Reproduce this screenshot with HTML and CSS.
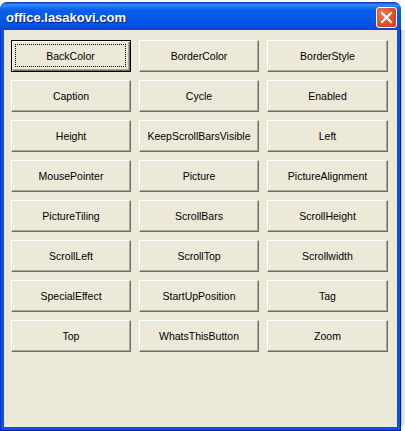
FILE: index.html
```html
<!DOCTYPE html>
<html>
<head>
<meta charset="utf-8">
<link rel="stylesheet" href="styles.css">
</head>
<body>
<div class="desk">
  <div class="window">
    <div class="titlebar">
      <span class="title">office.lasakovi.com</span>
      <span class="close">
        <svg width="21" height="21" viewBox="0 0 21 21">
          <path d="M6 6 L15 15 M15 6 L6 15" stroke="#fff" stroke-width="2.2" stroke-linecap="square"/>
        </svg>
      </span>
    </div>
    <div class="frame">
      <div class="client">
        <div class="grid">
          <button class="btn default"><span class="focus">BackColor</span></button>
          <button class="btn">BorderColor</button>
          <button class="btn">BorderStyle</button>
          <button class="btn">Caption</button>
          <button class="btn">Cycle</button>
          <button class="btn">Enabled</button>
          <button class="btn">Height</button>
          <button class="btn">KeepScrollBarsVisible</button>
          <button class="btn">Left</button>
          <button class="btn">MousePointer</button>
          <button class="btn">Picture</button>
          <button class="btn">PictureAlignment</button>
          <button class="btn">PictureTiling</button>
          <button class="btn">ScrollBars</button>
          <button class="btn">ScrollHeight</button>
          <button class="btn">ScrollLeft</button>
          <button class="btn">ScrollTop</button>
          <button class="btn">Scrollwidth</button>
          <button class="btn">SpecialEffect</button>
          <button class="btn">StartUpPosition</button>
          <button class="btn">Tag</button>
          <button class="btn">Top</button>
          <button class="btn">WhatsThisButton</button>
          <button class="btn">Zoom</button>
        </div>
      </div>
    </div>
  </div>
  <div class="side"></div>
</div>
</body>
</html>
```
FILE: styles.css
```css
html, body {
  margin: 0;
  padding: 0;
  background: #ffffff;
}
.desk {
  display: flex;
  width: 405px;
  height: 431px;
  overflow: hidden;
}
.window {
  width: 401px;
  margin-top: 2px;
  display: flex;
  flex-direction: column;
  flex: none;
}
.side {
  flex: 1;
  margin-top: 30px;
  height: 396px;
  background: linear-gradient(to bottom, #e4e4ea 0, #e4e4ea 100%);
  border-left: 1px solid #b8b8c8;
}
.titlebar {
  height: 28px;
  border-radius: 7px 7px 0 0;
  background: linear-gradient(to bottom,
    #0a5ae8 0px, #3d8ff8 2px, #1f72f4 4px, #0860ec 7px,
    #0558e6 14px, #0553e0 22px, #0448d4 26px, #0343cc 28px);
  border-top: 1px solid #0b3fc0;
  display: flex;
  align-items: center;
  justify-content: space-between;
  padding: 0 4px 0 6px;
  box-sizing: border-box;
}
.title {
  font-family: "Liberation Sans", Arial, sans-serif;
  font-weight: bold;
  font-size: 13px;
  color: #ffffff;
  text-shadow: 1px 1px 0 #0a1e80;
  margin-top: 2px;
}
.close {
  width: 21px;
  height: 21px;
  box-sizing: border-box;
  border: 1px solid #ffffff;
  border-radius: 3px;
  background: radial-gradient(circle at 30% 30%, #f07850 0, #e0512c 50%, #c6411e 100%);
  display: flex;
  align-items: center;
  justify-content: center;
  margin-top: 1px;
}
.close svg {
  display: block;
  margin: -1px;
}
.frame {
  flex: 1;
  height: 398px;
  background: #0555e2;
  border-left: 1px solid #0a2ec0;
  border-right: 1px solid #001f9c;
  border-bottom: 1px solid #001f9c;
  padding: 0 3px 3px 3px;
  box-sizing: border-box;
  display: flex;
}
.client {
  flex: 1;
  background: #ece9d8;
  padding: 10px 0 0 7px;
  box-sizing: border-box;
}
.grid {
  display: grid;
  grid-template-columns: 120px 120px 121px;
  grid-auto-rows: 32px;
  column-gap: 8px;
  row-gap: 8px;
}
.btn {
  margin: 0;
  padding: 0;
  font-family: "Liberation Sans", Arial, sans-serif;
  font-size: 10.5px;
  color: #000000;
  background: #ece9d8;
  border: 1px solid;
  border-color: #ffffff #716f64 #716f64 #ffffff;
  box-shadow: inset -1px -1px 0 #aca899;
  box-sizing: border-box;
  display: flex;
  align-items: center;
  justify-content: center;
}
.btn.default {
  border: 1px solid #000000;
  box-shadow: inset 1px 1px 0 #ffffff, inset -1px -1px 0 #716f64, inset -2px -2px 0 #aca899;
  padding: 3px 4px 4px 3px;
}
.focus {
  flex: 1;
  align-self: stretch;
  display: flex;
  align-items: center;
  justify-content: center;
  border: 1px dotted #000000;
}
```
